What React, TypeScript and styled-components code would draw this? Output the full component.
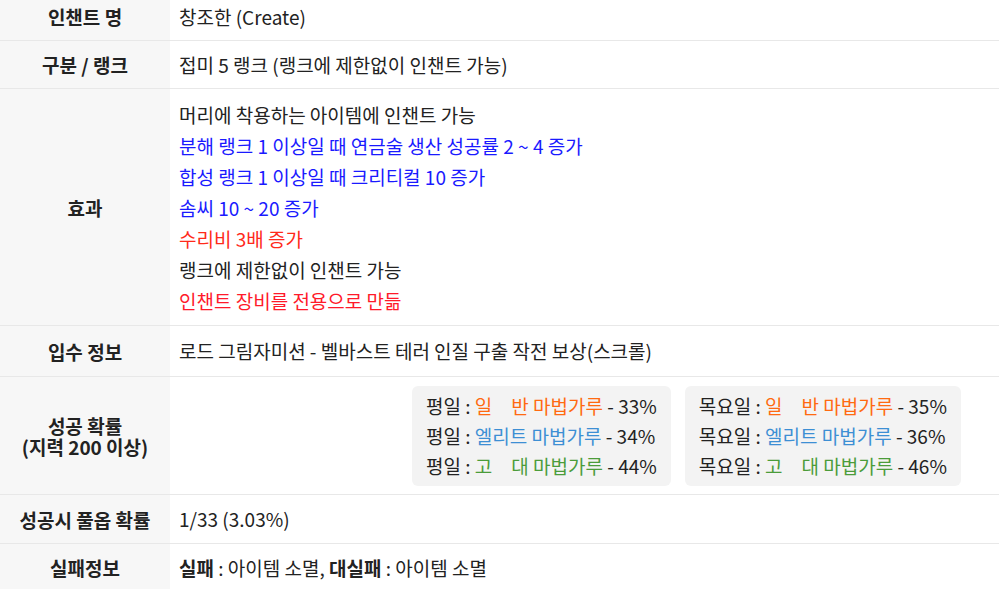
import React from "react";
import styled, { createGlobalStyle } from "styled-components";

const GlobalStyle = createGlobalStyle`
  html, body {
    margin: 0;
    padding: 0;
    overflow: hidden;
    background: #fff;
  }
  body {
    font-family: "Noto Sans CJK KR", "Noto Sans", sans-serif;
    font-size: 19px;
    color: #222;
  }
`;

const Table = styled.div`
  width: 1203px;
  margin-top: -7px;
  display: flex;
  flex-direction: column;
`;

const Row = styled.div`
  display: grid;
  grid-template-columns: 170px 1fr;
  border-bottom: 1px solid #e8e8e8;
`;

const Label = styled.div`
  background-color: #f7f7f7;
  display: flex;
  align-items: center;
  justify-content: center;
  text-align: center;
  font-weight: bold;
  font-size: 19px;
  line-height: 21px;
`;

const Value = styled.div<{ $pad?: string }>`
  padding: ${(p) => p.$pad || "12px 9px"};
  line-height: 23px;
`;

const Line = styled.div<{ $color?: string }>`
  line-height: 31px;
  color: ${(p) => p.$color || "#222"};
`;

const BoxRow = styled.div`
  display: flex;
  justify-content: center;
  gap: 14px;
`;

const Box = styled.div`
  background-color: #f3f3f3;
  border-radius: 6px;
  padding: 5px 14px;
`;

const BoxLine = styled.div`
  line-height: 30px;
  white-space: nowrap;
`;

const Powder = styled.span<{ $color: string }>`
  color: ${(p) => p.$color};
`;

const Grade = styled.span`
  display: inline-flex;
  justify-content: space-between;
  width: 54px;
`;

const Bold = styled.b`
  font-weight: bold;
`;

const ORANGE = "#ff6a10";
const SKY = "#3d8fd4";
const GREEN = "#4b9c3a";

const days = [
  { day: "평일", rates: ["33", "34", "44"] },
  { day: "목요일", rates: ["35", "36", "46"] },
];

const grades = [
  { name: "일반", color: ORANGE, spread: true },
  { name: "엘리트", color: SKY, spread: false },
  { name: "고대", color: GREEN, spread: true },
];

export default function App() {
  return (
    <>
      <GlobalStyle />
      <Table>
        <Row>
          <Label>인챈트 명</Label>
          <Value>창조한 (Create)</Value>
        </Row>
        <Row>
          <Label>구분 / 랭크</Label>
          <Value>접미 5 랭크 (랭크에 제한없이 인챈트 가능)</Value>
        </Row>
        <Row>
          <Label>효과</Label>
          <Value $pad="10px 9px 9px">
            <Line>머리에 착용하는 아이템에 인챈트 가능</Line>
            <Line $color="#1a1aff">분해 랭크 1 이상일 때 연금술 생산 성공률 2 ~ 4 증가</Line>
            <Line $color="#1a1aff">합성 랭크 1 이상일 때 크리티컬 10 증가</Line>
            <Line $color="#1a1aff">솜씨 10 ~ 20 증가</Line>
            <Line $color="#ff2a1a">수리비 3배 증가</Line>
            <Line>랭크에 제한없이 인챈트 가능</Line>
            <Line $color="#ff1a2a">인챈트 장비를 전용으로 만듦</Line>
          </Value>
        </Row>
        <Row>
          <Label>입수 정보</Label>
          <Value $pad="13px 9px 14px">
            로드 그림자미션 - 벨바스트 테러 인질 구출 작전 보상(스크롤)
          </Value>
        </Row>
        <Row>
          <Label>
            성공 확률
            <br />
            (지력 200 이상)
          </Label>
          <Value $pad="9px 9px 8px">
            <BoxRow>
              {days.map((d) => (
                <Box key={d.day}>
                  {grades.map((g, i) => (
                    <BoxLine key={g.name}>
                      {d.day} :{" "}
                      <Powder $color={g.color}>
                        {g.spread ? (
                          <Grade>
                            <span>{g.name[0]}</span>
                            <span>{g.name[1]}</span>
                          </Grade>
                        ) : (
                          g.name
                        )}{" "}
                        마법가루
                      </Powder>{" "}
                      - {d.rates[i]}%
                    </BoxLine>
                  ))}
                </Box>
              ))}
            </BoxRow>
          </Value>
        </Row>
        <Row>
          <Label>성공시 풀옵 확률</Label>
          <Value $pad="12px 9px 13px">1/33 (3.03%)</Value>
        </Row>
        <Row>
          <Label>실패정보</Label>
          <Value>
            <Bold>실패</Bold> : 아이템 소멸, <Bold>대실패</Bold> : 아이템 소멸
          </Value>
        </Row>
      </Table>
    </>
  );
}
